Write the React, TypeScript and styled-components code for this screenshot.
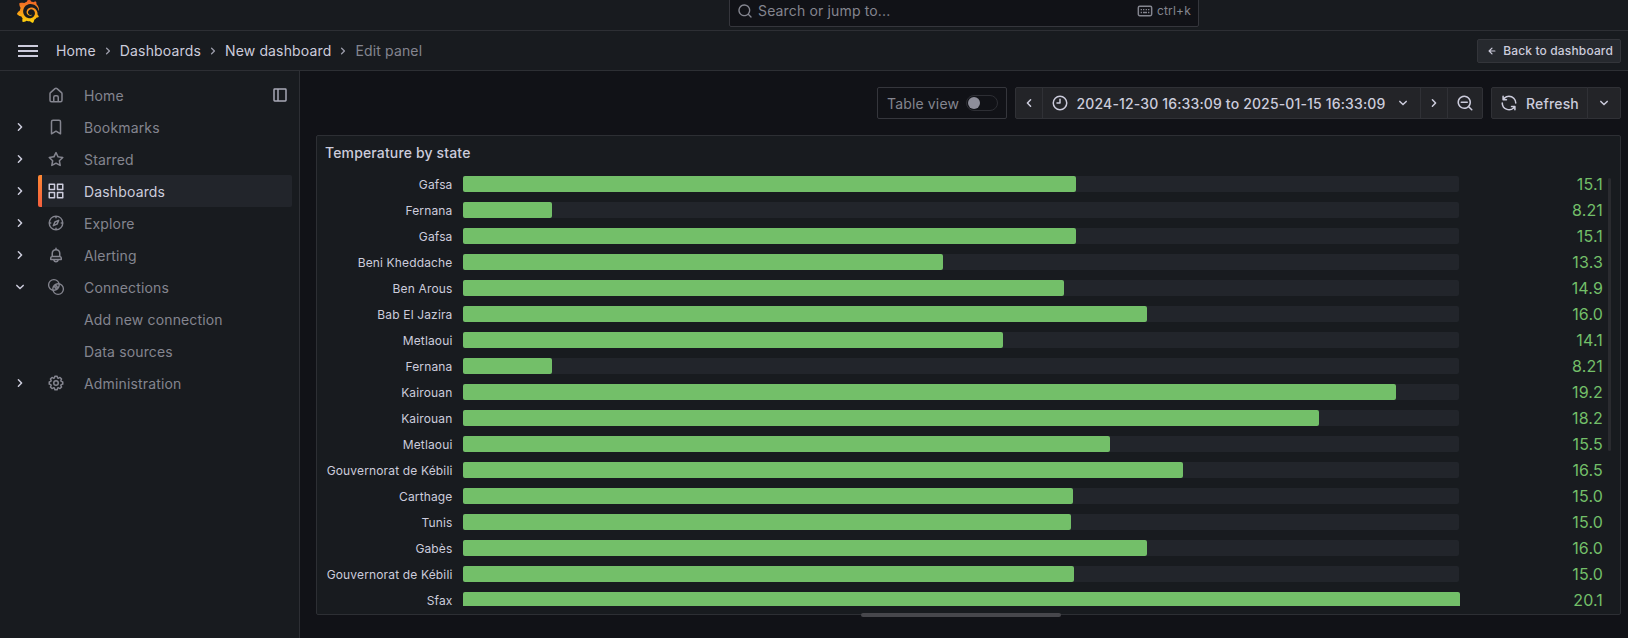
import React from "react";
import styled, { createGlobalStyle, css } from "styled-components";
import { SiGrafana } from "react-icons/si";

const color = {
  canvas: "#111217",
  surface: "#181b1f",
  line: "#2d2f34",
  button: "#232428",
  text: "#ccccdc",
  muted: "#84858f",
  track: "#22252b",
  green: "#73bf69",
};

const GlobalStyle = createGlobalStyle`
  *, *::before, *::after { box-sizing: border-box; }
  body {
    margin: 0;
    background: ${color.canvas};
    color: ${color.text};
    font: 400 14px/22px Inter, "Liberation Sans", sans-serif;
    letter-spacing: 0.15px;
    overflow: hidden;
  }
  button { font: inherit; letter-spacing: inherit; color: inherit; padding: 0; margin: 0; }
  svg { display: block; flex: none; }
`;

const paths = {
  home: "M20,8h0L14,2.74a3,3,0,0,0-4,0L4,8a3,3,0,0,0-1,2.26V19a3,3,0,0,0,3,3H18a3,3,0,0,0,3-3V10.25A3,3,0,0,0,20,8ZM14,20H10V15a1,1,0,0,1,1-1h2a1,1,0,0,1,1,1Zm5-1a1,1,0,0,1-1,1H16V15a3,3,0,0,0-3-3H11a3,3,0,0,0-3,3v5H6a1,1,0,0,1-1-1V10.25a1,1,0,0,1,.34-.75l6-5.25a1,1,0,0,1,1.32,0l6,5.25a1,1,0,0,1,.34.75Z",
  bookmark: "M16,2H8A3,3,0,0,0,5,5V21a1,1,0,0,0,.5.87,1,1,0,0,0,1,0L12,18.69l5.5,3.18A1,1,0,0,0,18,22a1,1,0,0,0,.5-.13A1,1,0,0,0,19,21V5A3,3,0,0,0,16,2Zm1,17.27-4.5-2.6a1,1,0,0,0-1,0L7,19.27V5A1,1,0,0,1,8,4h8a1,1,0,0,1,1,1Z",
  star: "M22,9.67A1,1,0,0,0,21.14,9l-5.69-.83L12.9,3a1,1,0,0,0-1.8,0L8.55,8.16,2.86,9a1,1,0,0,0-.81.68,1,1,0,0,0,.25,1l4.13,4-1,5.68A1,1,0,0,0,6.9,21.44L12,18.77l5.1,2.67a.93.93,0,0,0,.46.12,1,1,0,0,0,.59-.19,1,1,0,0,0,.4-1l-1-5.68,4.13-4A1,1,0,0,0,22,9.67Zm-6.15,4a1,1,0,0,0-.29.88l.72,4.2-3.76-2a1.06,1.06,0,0,0-.94,0l-3.76,2,.72-4.2a1,1,0,0,0-.29-.88l-3-3,4.21-.61a1,1,0,0,0,.76-.55L12,5.7l1.88,3.82a1,1,0,0,0,.76.55l4.21.61Z",
  apps: "M10,13H3a1,1,0,0,0-1,1v7a1,1,0,0,0,1,1h7a1,1,0,0,0,1-1V14A1,1,0,0,0,10,13ZM9,20H4V15H9ZM21,2H14a1,1,0,0,0-1,1v7a1,1,0,0,0,1,1h7a1,1,0,0,0,1-1V3A1,1,0,0,0,21,2ZM20,9H15V4h5Zm1,4H14a1,1,0,0,0-1,1v7a1,1,0,0,0,1,1h7a1,1,0,0,0,1-1V14A1,1,0,0,0,21,13Zm-1,7H15V15h5ZM10,2H3A1,1,0,0,0,2,3v7a1,1,0,0,0,1,1h7a1,1,0,0,0,1-1V3A1,1,0,0,0,10,2ZM9,9H4V4H9Z",
  compass: "M12,2A10,10,0,1,0,22,12,10,10,0,0,0,12,2Zm1,17.93V19a1,1,0,0,0-2,0v.93A8,8,0,0,1,4.07,13H5a1,1,0,0,0,0-2H4.07A8,8,0,0,1,11,4.07V5a1,1,0,0,0,2,0V4.07A8,8,0,0,1,19.93,11H19a1,1,0,0,0,0,2h.93A8,8,0,0,1,13,19.93ZM15.14,7.55l-5,2.12a1,1,0,0,0-.52.52l-2.12,5a1,1,0,0,0,.21,1.1,1,1,0,0,0,.7.29.93.93,0,0,0,.4-.09l5-2.12a1,1,0,0,0,.52-.52l2.12-5a1,1,0,0,0-1.31-1.31Zm-2.49,5.1-2.28,1,1-2.28,2.28-1Z",
  bell: "M18,13.18V10a6,6,0,0,0-5-5.91V3a1,1,0,0,0-2,0V4.09A6,6,0,0,0,6,10v3.18A3,3,0,0,0,4,16v2a1,1,0,0,0,1,1H8.14a4,4,0,0,0,7.72,0H19a1,1,0,0,0,1-1V16A3,3,0,0,0,18,13.18ZM8,10a4,4,0,0,1,8,0v3H8Zm4,10a2,2,0,0,1-1.72-1h3.44A2,2,0,0,1,12,20Zm6-3H6V16a1,1,0,0,1,1-1H17a1,1,0,0,1,1,1Z",
  cog: "M21.32,9.55l-1.89-.63.89-1.78A1,1,0,0,0,20.13,6L18,3.87a1,1,0,0,0-1.15-.19l-1.78.89-.63-1.89A1,1,0,0,0,13.5,2h-3a1,1,0,0,0-.95.68L8.92,4.57,7.14,3.68A1,1,0,0,0,6,3.87L3.87,6a1,1,0,0,0-.19,1.15l.89,1.78-1.89.63A1,1,0,0,0,2,10.5v3a1,1,0,0,0,.68.95l1.89.63-.89,1.78A1,1,0,0,0,3.87,18L6,20.13a1,1,0,0,0,1.15.19l1.78-.89.63,1.89a1,1,0,0,0,.95.68h3a1,1,0,0,0,.95-.68l.63-1.89,1.78.89A1,1,0,0,0,18,20.13L20.13,18a1,1,0,0,0,.19-1.15l-.89-1.78,1.89-.63A1,1,0,0,0,22,13.5v-3A1,1,0,0,0,21.32,9.55ZM20,12.78l-1.2.4A2,2,0,0,0,17.64,16l.57,1.14-1.1,1.1L16,17.64a2,2,0,0,0-2.79,1.16l-.4,1.2H11.22l-.4-1.2A2,2,0,0,0,8,17.64l-1.14.57-1.1-1.1L6.36,16A2,2,0,0,0,5.2,13.18L4,12.78V11.22l1.2-.4A2,2,0,0,0,6.36,8L5.79,6.89l1.1-1.1L8,6.36A2,2,0,0,0,10.82,5.2l.4-1.2h1.56l.4,1.2A2,2,0,0,0,16,6.36l1.14-.57,1.1,1.1L17.64,8a2,2,0,0,0,1.16,2.79l1.2.4ZM12,8a4,4,0,1,0,4,4A4,4,0,0,0,12,8Zm0,6a2,2,0,1,1,2-2A2,2,0,0,1,12,14Z",
  right: "M14.83,11.29,10.59,7.05a1,1,0,0,0-1.42,0,1,1,0,0,0,0,1.41L12.71,12,9.17,15.54a1,1,0,0,0,0,1.41,1,1,0,0,0,.71.29,1,1,0,0,0,.71-.29l4.24-4.24A1,1,0,0,0,14.83,11.29Z",
  left: "M11.29,12l3.54-3.54a1,1,0,0,0,0-1.41,1,1,0,0,0-1.42,0L9.17,11.29a1,1,0,0,0,0,1.42L13.41,17a1,1,0,0,0,.71.29,1,1,0,0,0,.71-.29,1,1,0,0,0,0-1.41Z",
  down: "M17,9.17a1,1,0,0,0-1.41,0L12,12.71,8.46,9.17a1,1,0,0,0-1.41,0,1,1,0,0,0,0,1.42l4.24,4.24a1,1,0,0,0,1.42,0L17,10.59A1,1,0,0,0,17,9.17Z",
  search: "M21.71,20.29,18,16.61A9,9,0,1,0,16.61,18l3.68,3.68a1,1,0,0,0,1.42,0A1,1,0,0,0,21.71,20.29ZM11,18a7,7,0,1,1,7-7A7,7,0,0,1,11,18Z",
  zoomOut: "M21.71,20.29,18,16.61A9,9,0,1,0,16.61,18l3.68,3.68a1,1,0,0,0,1.42,0A1,1,0,0,0,21.71,20.29ZM11,18a7,7,0,1,1,7-7A7,7,0,0,1,11,18ZM15,10H7a1,1,0,0,0,0,2h8a1,1,0,0,0,0-2Z",
  clock: "M12,2A10,10,0,1,0,22,12,10,10,0,0,0,12,2Zm0,18a8,8,0,1,1,8-8A8,8,0,0,1,12,20ZM12,6a1,1,0,0,0-1,1v4H8a1,1,0,0,0,0,2h4a1,1,0,0,0,1-1V7A1,1,0,0,0,12,6Z",
  sync: "M19.91,15.51H15.38a1,1,0,0,0,0,2h2.4A8,8,0,0,1,4,12a1,1,0,0,0-2,0,10,10,0,0,0,16.88,7.23V21a1,1,0,0,0,2,0V16.5A1,1,0,0,0,19.91,15.51ZM12,2A10,10,0,0,0,5.12,4.77V3a1,1,0,0,0-2,0V7.5a1,1,0,0,0,1,1h4.5a1,1,0,0,0,0-2H6.22A8,8,0,0,1,20,12a1,1,0,0,0,2,0A10,10,0,0,0,12,2Z",
  back: "M17,11H9.41l3.3-3.29a1,1,0,1,0-1.42-1.42l-5,5a1,1,0,0,0-.21.33,1,1,0,0,0,0,.76,1,1,0,0,0,.21.33l5,5a1,1,0,0,0,1.42,0,1,1,0,0,0,0-1.42L9.41,13H17a1,1,0,0,0,0-2Z",
};

type IconName = keyof typeof paths | "link" | "dock" | "keyboard";

function Icon({ name, size = 18 }: { name: IconName; size?: number }) {
  const props = { width: size, height: size, viewBox: "0 0 24 24", fill: "currentColor" };
  const stroke = { ...props, fill: "none", stroke: "currentColor", strokeWidth: 2 };
  if (name === "link")
    return (
      <svg {...stroke} strokeWidth={1.8}>
        <circle cx="9.2" cy="9.2" r="7.1" />
        <circle cx="14.8" cy="14.8" r="7.1" />
        <path d="M8.8 12.8l4-4M11.2 15.2l4-4M10.3 13.7l3.4-3.4" strokeWidth="1.5" />
      </svg>
    );
  if (name === "dock")
    return (
      <svg {...stroke} strokeWidth={2.2}>
        <rect x="3" y="3" width="18" height="18" rx="1" />
        <path d="M9 3v18" />
      </svg>
    );
  if (name === "keyboard")
    return (
      <svg {...stroke} strokeWidth={2.2}>
        <rect x="2" y="5" width="20" height="14" rx="2" />
        <path d="M5.5 10h2M9 10h2M13 10h2M16.5 10h2M5.5 14.2h2M9 14.2h6M16.5 14.2h2" strokeWidth="2" />
      </svg>
    );
  return (
    <svg {...props}>
      <path d={paths[name]} />
    </svg>
  );
}

const Page = styled.div`
  height: 638px;
  display: flex;
  flex-direction: column;
  overflow: hidden;
`;

const TopBar = styled.header`
  height: 31px;
  flex: none;
  display: flex;
  align-items: flex-end;
  overflow: hidden;
  background: ${color.surface};
  border-bottom: 1px solid ${color.line};
`;
const TopBarInner = styled.div`
  flex: 1;
  height: 39px;
  display: grid;
  grid-template-columns: 713px 470px 1fr;
  align-items: center;
  padding: 0 16px;
`;
const Logo = styled(SiGrafana)`
  width: 24px;
  height: 24px;
`;
const GradientDefs = styled.svg`
  position: absolute;
`;
const SearchBox = styled.div`
  height: 32px;
  display: flex;
  align-items: center;
  padding: 0 7px;
  background: ${color.canvas};
  border: 1px solid #35363c;
  border-radius: 2px;
  color: ${color.muted};
`;
const SearchText = styled.span`
  flex: 1;
  margin-left: 5px;
`;
const Shortcut = styled.span`
  display: flex;
  align-items: center;
  gap: 4px;
  font-size: 12px;
  letter-spacing: 0.2px;
`;

const CrumbBar = styled.nav`
  height: 40px;
  flex: none;
  display: flex;
  align-items: center;
  padding: 0 7px 0 18px;
  background: ${color.surface};
  border-bottom: 1px solid ${color.line};
`;
const Burger = styled.button`
  width: 20px;
  height: 12px;
  margin-right: 18px;
  display: flex;
  flex-direction: column;
  justify-content: space-between;
  background: none;
  border: 0;
  span { height: 2px; background: ${color.text}; }
`;
const Crumb = styled.span<{ $current?: boolean }>`
  color: ${(p) => (p.$current ? color.muted : color.text)};
`;
const CrumbArrow = styled.span`
  margin: 0 4px;
  color: #9a9ba8;
`;
const BackButton = styled.button`
  height: 24px;
  margin-left: auto;
  padding: 0 7px;
  display: flex;
  align-items: center;
  gap: 4px;
  font-size: 12px;
  font-weight: 500;
  background: #26292e;
  border: 1px solid #33353a;
  border-radius: 2px;
`;

const Body = styled.div`
  flex: 1;
  min-height: 0;
  display: flex;
`;

const Sidebar = styled.aside`
  width: 300px;
  flex: none;
  padding: 8px 7px 0 11px;
  background: ${color.surface};
  border-right: 1px solid ${color.line};
`;
const NavRow = styled.div`
  height: 32px;
  display: flex;
  align-items: center;
`;
const NavToggle = styled.span`
  width: 27px;
  color: ${color.text};
`;
const NavLink = styled.div<{ $active?: boolean }>`
  flex: 1;
  height: 32px;
  display: flex;
  align-items: center;
  padding-right: 4px;
  border-radius: 2px;
  color: ${(p) => (p.$active ? color.text : color.muted)};
  ${(p) =>
    p.$active &&
    css`
      background:
        linear-gradient(#ff8833, #f55f3e) left / 4px 100% no-repeat,
        ${color.track};
    `}
`;
const NavIcon = styled.span`
  width: 18px;
  margin: 0 19px 0 9px;
`;
const NavLabel = styled.span`
  padding-top: 2px;
`;
const DockButton = styled.span`
  margin-left: auto;
  color: #a9aab8;
`;

const Main = styled.main`
  flex: 1;
  min-width: 0;
  display: flex;
  flex-direction: column;
  padding: 16px 7px 0 16px;
`;
const Toolbar = styled.div`
  height: 32px;
  display: flex;
  justify-content: flex-end;
  gap: 8px;
`;
const TableView = styled.label`
  width: 130px;
  display: flex;
  align-items: center;
  justify-content: space-between;
  padding: 0 8px 0 9px;
  color: ${color.muted};
  border: 1px solid #35363c;
  border-radius: 2px;
`;
const TableViewText = styled.span`
  padding-top: 2px;
  white-space: nowrap;
`;
const Switch = styled.span`
  width: 32px;
  height: 16px;
  flex: none;
  padding: 1px;
  border: 1px solid #2d2e34;
  border-radius: 8px;
  &::before {
    content: "";
    display: block;
    width: 12px;
    height: 12px;
    border-radius: 50%;
    background: #8e8e9a;
  }
`;
const ButtonGroup = styled.div`
  display: flex;
`;
const ToolButton = styled.button<{ $width: number }>`
  width: ${(p) => p.$width}px;
  height: 32px;
  display: flex;
  align-items: center;
  justify-content: center;
  font-weight: 500;
  background: ${color.button};
  border: 1px solid #303136;
  & + & { margin-left: -1px; }
  &:first-child { border-radius: 2px 0 0 2px; }
  &:last-child { border-radius: 0 2px 2px 0; }
`;
const ToolLabel = styled.span<{ $after?: number }>`
  margin: 0 ${(p) => p.$after ?? 0}px 0 8px;
  padding-top: 2px;
  white-space: nowrap;
`;

const Panel = styled.section`
  position: relative;
  height: 480px;
  margin-top: 16px;
  background: ${color.surface};
  border: 1px solid ${color.line};
  border-radius: 2px;
`;
const PanelTitle = styled.h2`
  height: 32px;
  margin: 0;
  padding: 0 8px;
  font-size: 14px;
  font-weight: 500;
  line-height: 33px;
`;
const Gauges = styled.div`
  height: 438px;
  padding: 8px 17px 0 9px;
  display: flex;
  flex-direction: column;
  gap: 10px;
  overflow: hidden;
`;
const GaugeRow = styled.div`
  height: 16px;
  flex: none;
  display: flex;
  align-items: center;
`;
const GaugeLabel = styled.span`
  width: 126.5px;
  margin-right: 10.5px;
  padding-top: 2px;
  text-align: right;
  font-size: 12px;
  white-space: nowrap;
`;
const Track = styled.div`
  width: 996px;
  height: 16px;
  border-radius: 2px;
  background: ${color.track};
`;
const Fill = styled.div`
  height: 16px;
  border-radius: 2px;
  background: ${color.green};
`;
const GaugeValue = styled.span`
  flex: 1;
  text-align: right;
  font-size: 16px;
  line-height: 16px;
  letter-spacing: 0.15px;
  color: ${color.green};
`;
const ScrollThumb = styled.div`
  position: absolute;
  top: 42px;
  right: 9px;
  width: 3px;
  height: 273px;
  border-radius: 2px;
  background: #2a2b2f;
`;
const ResizeHandle = styled.div`
  position: absolute;
  bottom: -3px;
  left: 544px;
  width: 200px;
  height: 4px;
  border-radius: 2px;
  background: #47474c;
`;

const nav: { label: string; icon?: IconName; toggle?: IconName; active?: boolean; dock?: boolean }[] = [
  { label: "Home", icon: "home", dock: true },
  { label: "Bookmarks", icon: "bookmark", toggle: "right" },
  { label: "Starred", icon: "star", toggle: "right" },
  { label: "Dashboards", icon: "apps", toggle: "right", active: true },
  { label: "Explore", icon: "compass", toggle: "right" },
  { label: "Alerting", icon: "bell", toggle: "right" },
  { label: "Connections", icon: "link", toggle: "down" },
  { label: "Add new connection" },
  { label: "Data sources" },
  { label: "Administration", icon: "cog", toggle: "right" },
];

const readings: [string, string, number][] = [
  ["Gafsa", "15.1", 613],
  ["Fernana", "8.21", 89],
  ["Gafsa", "15.1", 613],
  ["Beni Kheddache", "13.3", 480],
  ["Ben Arous", "14.9", 601],
  ["Bab El Jazira", "16.0", 684],
  ["Metlaoui", "14.1", 540],
  ["Fernana", "8.21", 89],
  ["Kairouan", "19.2", 933],
  ["Kairouan", "18.2", 856],
  ["Metlaoui", "15.5", 647],
  ["Gouvernorat de Kébili", "16.5", 720],
  ["Carthage", "15.0", 610],
  ["Tunis", "15.0", 608],
  ["Gabès", "16.0", 684],
  ["Gouvernorat de Kébili", "15.0", 611],
  ["Sfax", "20.1", 997],
];

export default function App() {
  return (
    <Page>
      <GlobalStyle />
      <GradientDefs width="0" height="0">
        <linearGradient id="flame" gradientUnits="userSpaceOnUse" x1="12" y1="24" x2="12" y2="0">
          <stop offset="0" stopColor="#fcd80e" />
          <stop offset="0.25" stopColor="#fbb50f" />
          <stop offset="0.6" stopColor="#f68a1f" />
          <stop offset="1" stopColor="#f05a28" />
        </linearGradient>
      </GradientDefs>
      <TopBar>
        <TopBarInner>
          <Logo fill="url(#flame)" />
          <SearchBox>
            <Icon name="search" size={16} />
            <SearchText>Search or jump to...</SearchText>
            <Shortcut>
              <Icon name="keyboard" size={16} />
              ctrl+k
            </Shortcut>
          </SearchBox>
        </TopBarInner>
      </TopBar>
      <CrumbBar>
        <Burger aria-label="Menu">
          <span />
          <span />
          <span />
        </Burger>
        {["Home", "Dashboards", "New dashboard"].map((c) => (
          <React.Fragment key={c}>
            <Crumb>{c}</Crumb>
            <CrumbArrow>
              <Icon name="right" size={16} />
            </CrumbArrow>
          </React.Fragment>
        ))}
        <Crumb $current>Edit panel</Crumb>
        <BackButton>
          <Icon name="back" size={14} />
          Back to dashboard
        </BackButton>
      </CrumbBar>
      <Body>
        <Sidebar>
          {nav.map((n) => (
            <NavRow key={n.label}>
              <NavToggle>{n.toggle && <Icon name={n.toggle} />}</NavToggle>
              <NavLink $active={n.active}>
                <NavIcon>{n.icon && <Icon name={n.icon} />}</NavIcon>
                <NavLabel>{n.label}</NavLabel>
                {n.dock && (
                  <DockButton>
                    <Icon name="dock" size={16} />
                  </DockButton>
                )}
              </NavLink>
            </NavRow>
          ))}
        </Sidebar>
        <Main>
          <Toolbar>
            <TableView>
              <TableViewText>Table view</TableViewText>
              <Switch />
            </TableView>
            <ButtonGroup>
              <ToolButton $width={28} aria-label="Earlier">
                <Icon name="left" />
              </ToolButton>
              <ToolButton $width={379}>
                <Icon name="clock" />
                <ToolLabel $after={9}>2024-12-30 16:33:09 to 2025-01-15 16:33:09</ToolLabel>
                <Icon name="down" />
              </ToolButton>
              <ToolButton $width={28} aria-label="Later">
                <Icon name="right" />
              </ToolButton>
              <ToolButton $width={36} aria-label="Zoom out">
                <Icon name="zoomOut" />
              </ToolButton>
            </ButtonGroup>
            <ButtonGroup>
              <ToolButton $width={97}>
                <Icon name="sync" />
                <ToolLabel>Refresh</ToolLabel>
              </ToolButton>
              <ToolButton $width={34} aria-label="Refresh interval">
                <Icon name="down" />
              </ToolButton>
            </ButtonGroup>
          </Toolbar>
          <Panel>
            <PanelTitle>Temperature by state</PanelTitle>
            <Gauges>
              {readings.map(([label, value, width], i) => (
                <GaugeRow key={i}>
                  <GaugeLabel>{label}</GaugeLabel>
                  <Track>
                    <Fill style={{ width }} />
                  </Track>
                  <GaugeValue>{value}</GaugeValue>
                </GaugeRow>
              ))}
            </Gauges>
            <ScrollThumb />
            <ResizeHandle />
          </Panel>
        </Main>
      </Body>
    </Page>
  );
}
